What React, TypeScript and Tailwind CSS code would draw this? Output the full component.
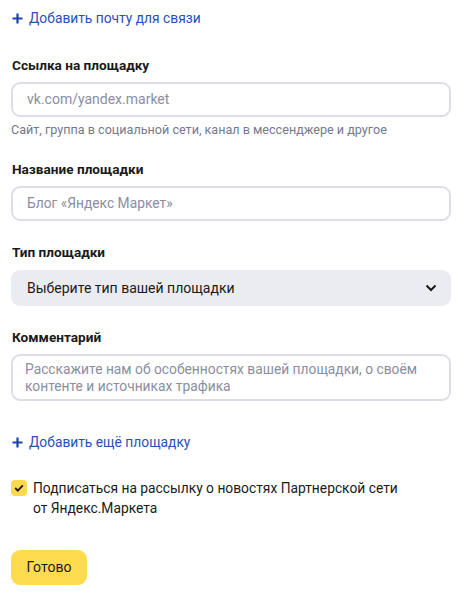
import React from "react";

const Plus = () => (
  <svg width="11" height="11" viewBox="0 0 11 11" className="shrink-0">
    <path d="M5.5 0.5v10M0.5 5.5h10" stroke="#1a44b0" strokeWidth="2.2" />
  </svg>
);

const Label = ({ children }: { children: React.ReactNode }) => (
  <div className="text-[13.6px] font-bold text-[#1a1a1a] leading-[20px]">{children}</div>
);

export default function App() {
  return (
    <div
      className="w-[476px] h-[597px] bg-white px-[11px] text-[#1a1a1a]"
      style={{ fontFamily: "Roboto, 'Noto Sans', sans-serif" }}
    >
      <div className="pt-[8px] flex items-center gap-[6px] h-[28px] pl-[1px]">
        <Plus />
        <span className="text-[13.8px] text-[#2a50b5]">Добавить почту для связи</span>
      </div>

      <div className="mt-[27px] pl-[1px]">
        <Label>Ссылка на площадку</Label>
      </div>
      <div className="mt-[7px] w-[440px] h-[35px] rounded-[9px] border-2 border-[#dcdee7] flex items-center px-[14px] text-[14px] text-[#8a8ea0]">
        vk.com/yandex.market
      </div>
      <div className="mt-[5px] text-[12.6px] text-[#75798a] leading-[16px]">
        Сайт, группа в социальной сети, канал в мессенджере и другое
      </div>

      <div className="mt-[21px] pl-[1px]">
        <Label>Название площадки</Label>
      </div>
      <div className="mt-[7px] w-[440px] h-[35px] rounded-[9px] border-2 border-[#dcdee7] flex items-center px-[14px] text-[13.8px] text-[#8a8ea0]">
        Блог «Яндекс Маркет»
      </div>

      <div className="mt-[21px] pl-[1px]">
        <Label>Тип площадки</Label>
      </div>
      <div className="mt-[8px] w-[440px] h-[36px] rounded-[9px] bg-[#ebecf2] flex items-center justify-between pl-[16px] pr-[14px]">
        <span className="text-[14px] text-[#1a1a1a]">Выберите тип вашей площадки</span>
        <svg width="12" height="8" viewBox="0 0 12 8">
          <path d="M1.5 1.5l4.5 4.5 4.5-4.5" fill="none" stroke="#1a1a1a" strokeWidth="2" />
        </svg>
      </div>

      <div className="mt-[21px] pl-[1px]">
        <Label>Комментарий</Label>
      </div>
      <div className="mt-[7px] w-[440px] h-[47px] rounded-[9px] border-2 border-[#dcdee7] px-[12px] pt-[5px] text-[13.8px] leading-[17px] text-[#8a8ea0]">
        Расскажите нам об особенностях вашей площадки, о своём контенте и источниках трафика
      </div>

      <div className="mt-[31px] flex items-center gap-[6px] pl-[1px] h-[20px]">
        <Plus />
        <span className="text-[13.8px] text-[#2a50b5]">Добавить ещё площадку</span>
      </div>

      <div className="mt-[26px] flex items-start gap-[6px]">
        <div className="mt-[2px] w-[16px] h-[16px] rounded-[4px] bg-[#ffd94d] flex items-center justify-center shrink-0">
          <svg width="10" height="8" viewBox="0 0 10 8">
            <path d="M1.2 4l2.6 2.6L8.8 1.4" fill="none" stroke="#1a1a1a" strokeWidth="1.8" />
          </svg>
        </div>
        <div className="text-[13.8px] leading-[20px] text-[#1a1a1a]">
          Подписаться на рассылку о новостях Партнерской сети
          <br />
          от Яндекс.Маркета
        </div>
      </div>

      <div className="mt-[32px]">
        <button className="w-[76px] h-[35px] rounded-[9px] bg-[#ffdb4d] text-[14px] text-[#1a1a1a]">
          Готово
        </button>
      </div>
    </div>
  );
}
